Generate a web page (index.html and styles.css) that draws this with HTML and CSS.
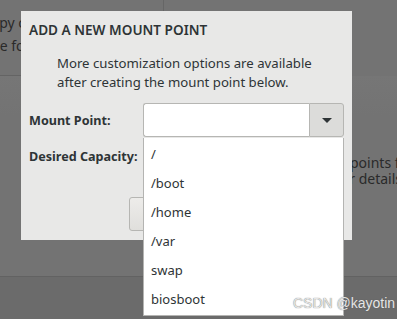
FILE: index.html
```html
<!DOCTYPE html>
<html>
<head>
<meta charset="utf-8">
<link rel="stylesheet" href="styles.css">
</head>
<body>
<div class="bg">
  <div class="bg-top">
    <div class="bg-left">
      <p class="bg-text shift1">copy clicking</p>
      <p class="bg-text shift2">the for</p>
    </div>
  </div>
  <div class="bg-mid">
    <p class="bg-text line1">points for</p>
    <p class="bg-text line2">for details</p>
  </div>
  <div class="bg-bottom"></div>
</div>

<div class="dialog">
  <h1 class="title">ADD A NEW MOUNT POINT</h1>
  <p class="desc">More customization options are available<br>after creating the mount point below.</p>
  <div class="row">
    <span class="label">Mount Point:</span>
    <div class="combo">
      <div class="combo-entry"></div>
      <div class="combo-btn"><span class="arrow"></span></div>
    </div>
  </div>
  <div class="row row2">
    <span class="label">Desired Capacity:</span>
  </div>
  <div class="actions">
    <div class="btn"></div>
  </div>
</div>

<ul class="popup">
  <li>/</li>
  <li>/boot</li>
  <li>/home</li>
  <li>/var</li>
  <li>swap</li>
  <li>biosboot</li>
</ul>

<div class="watermark">CSDN @kayotin</div>
</body>
</html>
```

FILE: styles.css
```css
html, body {
  margin: 0;
  padding: 0;
}
body {
  width: 397px;
  height: 319px;
  overflow: hidden;
  position: relative;
  background: #737373;
  font-family: "Noto Sans", "DejaVu Sans", sans-serif;
  color: #2e3436;
}
.bg {
  display: flex;
  flex-direction: column;
  height: 319px;
}
.bg-top {
  height: 76px;
  display: flex;
}
.bg-left {
  width: 164px;
  border-right: 1px solid #666;
  border-bottom: 1px solid #646464;
  box-sizing: border-box;
  overflow: hidden;
  padding-top: 11px;
}
.bg-text {
  margin: 0;
  font-size: 14px;
  line-height: 23px;
  color: #2a2a2a;
  white-space: nowrap;
}
.shift1 { margin-left: -16px; }
.shift2 { margin-left: -14px; }
.bg-mid {
  height: 201px;
  padding-top: 79px;
  box-sizing: border-box;
  display: flex;
  flex-direction: column;
  border-bottom: 1px solid #626262;
  background: linear-gradient(#767676, #737373 40px);
}
.bg-mid .bg-text {
  line-height: 16px;
}
.line1 { margin-left: 350px; }
.line2 { margin-left: 336px; }
.bg-bottom {
  flex: 1;
  background: #6b6b6b;
}

.dialog {
  position: absolute;
  left: 21px;
  top: 11px;
  width: 331px;
  height: 229px;
  background: #e8e8e7;
  box-sizing: border-box;
  padding: 8px 8px 0 8px;
  display: flex;
  flex-direction: column;
}
.title {
  margin: 0;
  font-size: 13.6px;
  font-weight: 600;
  line-height: 22px;
  color: #2e3436;
}
.desc {
  margin: 13px 0 0 28px;
  font-size: 13.2px;
  line-height: 19px;
  color: #2e3436;
  white-space: nowrap;
}
.row {
  display: flex;
  align-items: center;
  margin-top: 11px;
  height: 34px;
}
.label {
  width: 114px;
  font-size: 12.6px;
  font-weight: 700;
  color: #2e3436;
}
.combo {
  display: flex;
  width: 201px;
  height: 34px;
  box-sizing: border-box;
}
.combo-entry {
  flex: 1;
  background: #fff;
  border: 1px solid #b6b6b3;
  border-right: none;
  border-radius: 3px 0 0 3px;
}
.combo-btn {
  width: 33px;
  background: #dcdcda;
  border: 1px solid #b6b6b3;
  border-radius: 0 3px 3px 0;
  display: flex;
  align-items: center;
  justify-content: center;
}
.arrow {
  width: 0;
  height: 0;
  border-left: 5px solid transparent;
  border-right: 5px solid transparent;
  border-top: 5px solid #2e3436;
}
.row2 {
  margin-top: 2px;
}
.actions {
  margin-top: 24px;
  padding-left: 100px;
}
.btn {
  width: 80px;
  height: 34px;
  box-sizing: border-box;
  border: 1px solid #b6b6b3;
  border-radius: 3px;
  background: linear-gradient(#edecea, #e0dfdc);
}

.popup {
  position: absolute;
  left: 143px;
  top: 138px;
  width: 201px;
  height: 178px;
  margin: 0;
  padding: 2px 0 0 0;
  list-style: none;
  background: #fff;
  border: 1px solid #b4b4b2;
  border-top: none;
  box-sizing: border-box;
}
.popup li {
  height: 29px;
  line-height: 29px;
  padding-left: 7px;
  font-size: 13px;
  color: #2e3436;
}

.watermark {
  position: absolute;
  left: 293px;
  top: 295px;
  font-family: "Liberation Sans", sans-serif;
  font-size: 14px;
  color: #e6e6e6;
  text-shadow: 0 0 1px #555;
  white-space: nowrap;
}
```
